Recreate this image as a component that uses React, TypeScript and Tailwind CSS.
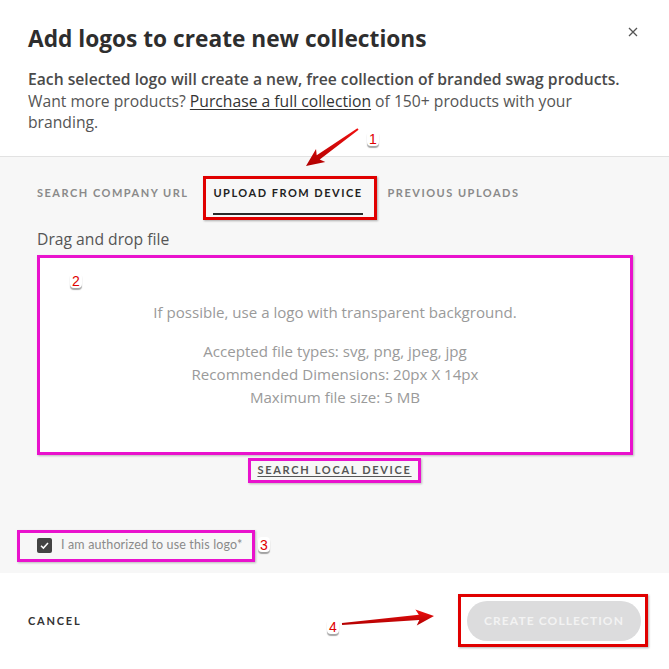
import React from "react";

function Badge({ n, className }: { n: string; className: string }) {
  return (
    <div
      className={
        "absolute flex h-[15px] w-[12px] items-center justify-center rounded-[4px] bg-white text-[14px] leading-none text-[#e00000] shadow-[0_2px_1px_rgba(0,0,0,0.35)] " +
        className
      }
      style={{ fontFamily: "'Liberation Sans', Arial, sans-serif" }}
    >
      {n}
    </div>
  );
}

function arrowPoints(x1: number, y1: number, x2: number, y2: number) {
  const dx = x2 - x1;
  const dy = y2 - y1;
  const len = Math.hypot(dx, dy);
  const ux = dx / len;
  const uy = dy / len;
  const px = -uy;
  const py = ux;
  const headLen = 15;
  const headW = 8;
  const tailW = 1;
  const neckW = 2.6;
  const bx = x2 - ux * headLen;
  const by = y2 - uy * headLen;
  const pts: [number, number][] = [
    [x1 + px * tailW, y1 + py * tailW],
    [bx + px * neckW, by + py * neckW],
    [bx - ux * 3 + px * headW, by - uy * 3 + py * headW],
    [x2, y2],
    [bx - ux * 3 - px * headW, by - uy * 3 - py * headW],
    [bx - px * neckW, by - py * neckW],
    [x1 - px * tailW, y1 - py * tailW],
  ];
  return pts.map((p) => p.join(",")).join(" ");
}

const OPEN = { fontFamily: "'Open Sans', 'Noto Sans', sans-serif" };

export default function App() {
  return (
    <div
      className="relative flex h-[669px] w-[669px] flex-col overflow-hidden bg-white"
      style={{ fontFamily: "Lato, 'Noto Sans', sans-serif" }}
    >
      {/* Header */}
      <div className="relative px-[28px] pb-[22px] pt-[25px]" style={OPEN}>
        <h1 className="text-[22.7px] font-bold leading-[28px] text-[#2e2e2e]">
          Add logos to create new collections
        </h1>
        <button className="absolute right-[30px] top-[26px] flex h-[12px] w-[12px] items-center justify-center text-[#555]">
          <svg width="10" height="10" viewBox="0 0 10 10">
            <path d="M1 1L9 9M9 1L1 9" stroke="#555" strokeWidth="1.3" />
          </svg>
        </button>
        <div className="mt-[16px] text-[15.7px] leading-[21.5px] text-[#555]">
          <div className="font-semibold text-[#4a4a4a]">
            Each selected logo will create a new, free collection of branded swag products.
          </div>
          <div>
            Want more products? <u className="text-[#333] underline-offset-2">Purchase a full collection</u> of 150+
            products with your branding.
          </div>
        </div>
      </div>

      {/* Gray body */}
      <div className="flex flex-col border-t border-[#e2e2e2] bg-[#f7f7f7] px-[37px] pb-[11px] pt-[28px]">
        <div className="flex gap-[25px] text-[11px] font-bold leading-[16px] tracking-[1.5px]">
          <div className="pb-[12px] text-[#8a8a8a]">SEARCH COMPANY URL</div>
          <div className="relative border-b-2 border-[#2a2a2a] pb-[12px] text-[#222]">
            UPLOAD FROM DEVICE
            <div className="absolute -left-[10px] -right-[14px] -top-[9px] -bottom-[7px] border-[3px] border-[#e00000] shadow-[1px_1px_2px_rgba(0,0,0,0.3)]" />
          </div>
          <div className="pb-[12px] text-[#8a8a8a]">PREVIOUS UPLOADS</div>
        </div>

        <div className="mt-[14px] text-[15.7px] leading-[20px] text-[#555]" style={OPEN}>
          Drag and drop file
        </div>

        <div
          className="relative mt-[6px] flex h-[200px] w-[596px] flex-col items-center border-[3px] border-[#e912cd] bg-white pt-[43px] text-[15.1px] text-[#9a9a9a] shadow-[1px_1px_2px_rgba(0,0,0,0.25)]"
          style={OPEN}
        >
          <div className="leading-[23px]">If possible, use a logo with transparent background.</div>
          <div className="mt-[16px] flex flex-col items-center leading-[23px]">
            <div>Accepted file types: svg, png, jpeg, jpg</div>
            <div>Recommended Dimensions: 20px X 14px</div>
            <div>Maximum file size: 5 MB</div>
          </div>
        </div>

        <div className="mt-[3px] flex justify-center">
          <div className="relative flex h-[25px] items-center border-[3px] border-[#e912cd] px-[6px] text-[11px] font-bold tracking-[1.7px] text-[#555] shadow-[1px_1px_2px_rgba(0,0,0,0.25)]">
            <span className="underline underline-offset-2">SEARCH LOCAL DEVICE</span>
          </div>
        </div>

        <div className="mt-[47px] flex">
          <div className="-ml-[20px] flex h-[32px] items-center gap-[9px] border-[3px] border-[#e912cd] pl-[17px] pr-[10px] shadow-[1px_1px_2px_rgba(0,0,0,0.25)]">
            <div className="flex h-[15px] w-[15px] items-center justify-center rounded-[2px] bg-[#444]">
              <svg width="11" height="11" viewBox="0 0 11 11">
                <path d="M2 5.8L4.4 8.1L9 3" stroke="white" strokeWidth="1.5" fill="none" />
              </svg>
            </div>
            <span className="text-[12.5px] tracking-[0.15px] text-[#8a8a8a]">I am authorized to use this logo*</span>
          </div>
        </div>
      </div>

      {/* Footer */}
      <div className="flex flex-1 items-center justify-between pl-[28px] pr-[28px]">
        <button className="text-[11px] font-bold tracking-[1.8px] text-[#333]">CANCEL</button>
        <div className="relative">
          <button className="flex h-[40px] w-[174px] items-center justify-center rounded-full bg-[#dcdcdd] text-[12px] font-bold tracking-[1.1px] text-[#f3f3f3]">
            CREATE COLLECTION
          </button>
          <div className="absolute -left-[9px] -right-[7px] -top-[7px] -bottom-[6px] border-[3px] border-[#e00000] shadow-[1px_1px_2px_rgba(0,0,0,0.3)]" />
        </div>
      </div>

      {/* Annotation overlay */}
      <svg className="pointer-events-none absolute left-0 top-0" width="669" height="669">
        <defs>
          <linearGradient id="ar" x1="0" y1="0" x2="0" y2="1">
            <stop offset="0" stopColor="#f01010" />
            <stop offset="1" stopColor="#b00000" />
          </linearGradient>
        </defs>
        <polygon points={arrowPoints(358, 129, 306, 166)} fill="url(#ar)" />
        <polygon points={arrowPoints(342, 624, 434, 616)} fill="url(#ar)" />
      </svg>
      <Badge n="1" className="left-[367px] top-[131px]" />
      <Badge n="2" className="left-[70px] top-[273px]" />
      <Badge n="3" className="left-[258px] top-[537px]" />
      <Badge n="4" className="left-[327px] top-[619px]" />
    </div>
  );
}
